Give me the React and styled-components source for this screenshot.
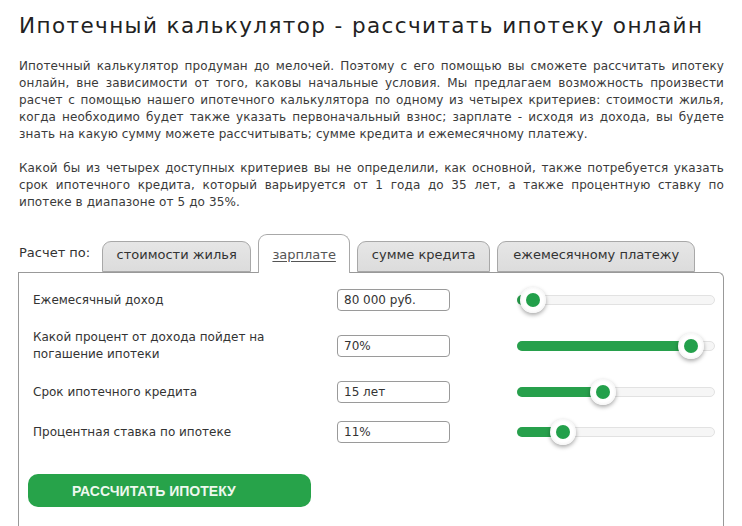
import React from 'react';
import styled, { createGlobalStyle } from 'styled-components';

const GlobalStyle = createGlobalStyle`
  html, body {
    margin: 0;
    padding: 0;
    background: #fff;
  }
  body {
    font-family: "DejaVu Sans", Verdana, sans-serif;
    color: #333;
  }
`;

const tabs = [
  { id: 'price', title: 'стоимости жилья', width: 149 },
  { id: 'salary', title: 'зарплате', width: 92, active: true },
  { id: 'credit', title: 'сумме кредита', width: 133 },
  { id: 'payment', title: 'ежемесячному платежу', width: 198 }
];

const fields = [
  { id: 'income', label: 'Ежемесячный доход', value: '80 000 руб.', pos: 15 },
  {
    id: 'percent',
    label: 'Какой процент от дохода пойдет на погашение ипотеки',
    value: '70%',
    pos: 173,
    tall: true
  },
  { id: 'term', label: 'Срок ипотечного кредита', value: '15 лет', pos: 85 },
  { id: 'rate', label: 'Процентная ставка по ипотеке', value: '11%', pos: 45 }
];

export default function App() {
  return (
    <Page>
      <GlobalStyle />
      <Title>Ипотечный калькулятор - рассчитать ипотеку онлайн</Title>
      <Text>
        Ипотечный калькулятор продуман до мелочей. Поэтому с его помощью вы
        сможете рассчитать ипотеку онлайн, вне зависимости от того, каковы
        начальные условия. Мы предлагаем возможность произвести расчет с
        помощью нашего ипотечного калькулятора по одному из четырех критериев:
        стоимости жилья, когда необходимо будет также указать первоначальный
        взнос; зарплате - исходя из дохода, вы будете знать на какую сумму
        можете рассчитывать; сумме кредита и ежемесячному платежу.
      </Text>
      <Text>
        Какой бы из четырех доступных критериев вы не определили, как основной,
        также потребуется указать срок ипотечного кредита, который варьируется
        от 1 года до 35 лет, а также процентную ставку по ипотеке в диапазоне
        от 5 до 35%.
      </Text>

      <TabBar>
        <TabLabel>Расчет по:</TabLabel>
        {tabs.map(tab => (
          <Tab key={tab.id} $active={tab.active} $width={tab.width}>
            {tab.title}
          </Tab>
        ))}
      </TabBar>

      <Panel>
        {fields.map(field => (
          <Row key={field.id} $tall={field.tall}>
            <Label>{field.label}</Label>
            <Input defaultValue={field.value} />
            <Slider>
              <Fill style={{ width: field.pos }} />
              <Thumb style={{ left: field.pos }} />
            </Slider>
          </Row>
        ))}
        <Button type="button">РАССЧИТАТЬ ИПОТЕКУ</Button>
      </Panel>
    </Page>
  );
}

const Page = styled.div`
  padding: 0 18px 0 18px;
`;
const Title = styled.h1`
  margin: 0;
  padding: 12px 0 0 1px;
  font-size: 21.5px;
  font-weight: normal;
  letter-spacing: 1.4px;
  line-height: 28px;
  color: #222;
`;
const Text = styled.p`
  margin: 18px 0 0 1px;
  font-size: 12px;
  line-height: 17px;
  letter-spacing: 0.1px;
  text-align: justify;
  color: #3a3a3a;
  & + & {
    margin-top: 17px;
  }
`;
const TabBar = styled.div`
  display: flex;
  align-items: flex-end;
  gap: 7px;
  margin-top: 23px;
  padding-left: 1px;
  position: relative;
  z-index: 1;
`;
const TabLabel = styled.div`
  font-size: 13px;
  color: #333;
  padding-bottom: 12px;
  margin-right: 5px;
`;
const Tab = styled.div`
  box-sizing: border-box;
  width: ${p => p.$width}px;
  height: ${p => (p.$active ? '39px' : '31px')};
  padding-top: ${p => (p.$active ? '11px' : '4px')};
  text-align: center;
  font-size: 13px;
  line-height: 18px;
  color: ${p => (p.$active ? '#555' : '#333')};
  text-decoration: ${p => (p.$active ? 'underline' : 'none')};
  text-underline-offset: 2px;
  background: ${p =>
    p.$active ? '#fff' : 'linear-gradient(#e6e6e6, #dcdcdc)'};
  border: 1px solid #a8a8a8;
  border-bottom: ${p => (p.$active ? 'none' : '1px solid #a8a8a8')};
  border-radius: 9px 9px 0 0;
  margin-bottom: ${p => (p.$active ? '-1px' : '0')};
  white-space: nowrap;
`;
const Panel = styled.div`
  border: 1px solid #999;
  border-bottom: none;
  border-radius: 0 6px 0 0;
  padding: 16px 8px 20px 14px;
`;
const Row = styled.div`
  display: grid;
  grid-template-columns: 304px 180px 198px;
  align-items: center;
  min-height: ${p => (p.$tall ? '34px' : '22px')};
  margin-bottom: 18px;
`;
const Label = styled.div`
  font-size: 12px;
  line-height: 17px;
  color: #333;
  padding-right: 40px;
`;
const Input = styled.input`
  box-sizing: border-box;
  width: 113px;
  height: 22px;
  border: 1px solid #9a9a9a;
  border-radius: 4px;
  padding: 0 6px;
  font-family: "DejaVu Sans", Verdana, sans-serif;
  font-size: 12px;
  color: #333;
  background: #fff;
  outline: none;
`;
const Slider = styled.div`
  position: relative;
  box-sizing: border-box;
  height: 10px;
  border: 1px solid #e2e2e2;
  border-radius: 5px;
  background: #f6f6f6;
`;
const Fill = styled.div`
  position: absolute;
  left: -1px;
  top: -1px;
  bottom: -1px;
  background: #27a04c;
  border-radius: 5px 0 0 5px;
`;
const Thumb = styled.div`
  position: absolute;
  top: 50%;
  width: 26px;
  height: 26px;
  margin: -13px 0 0 -13px;
  border-radius: 50%;
  background: radial-gradient(circle, #fff 55%, #e4e4e4 100%);
  box-shadow: 0 2px 4px rgba(0, 0, 0, 0.35);
  &::after {
    content: '';
    position: absolute;
    left: 6px;
    top: 6px;
    width: 14px;
    height: 14px;
    border-radius: 50%;
    background: #23a04b;
  }
`;
const Button = styled.button`
  display: block;
  box-sizing: border-box;
  width: 283px;
  height: 33px;
  margin: 31px 0 0 -5px;
  padding: 0 0 0 44px;
  text-align: left;
  border: none;
  border-radius: 10px;
  background: #27a34a;
  color: #eef8ee;
  font-family: "Liberation Sans", Arial, sans-serif;
  font-weight: bold;
  font-size: 14px;
  cursor: pointer;
`;
